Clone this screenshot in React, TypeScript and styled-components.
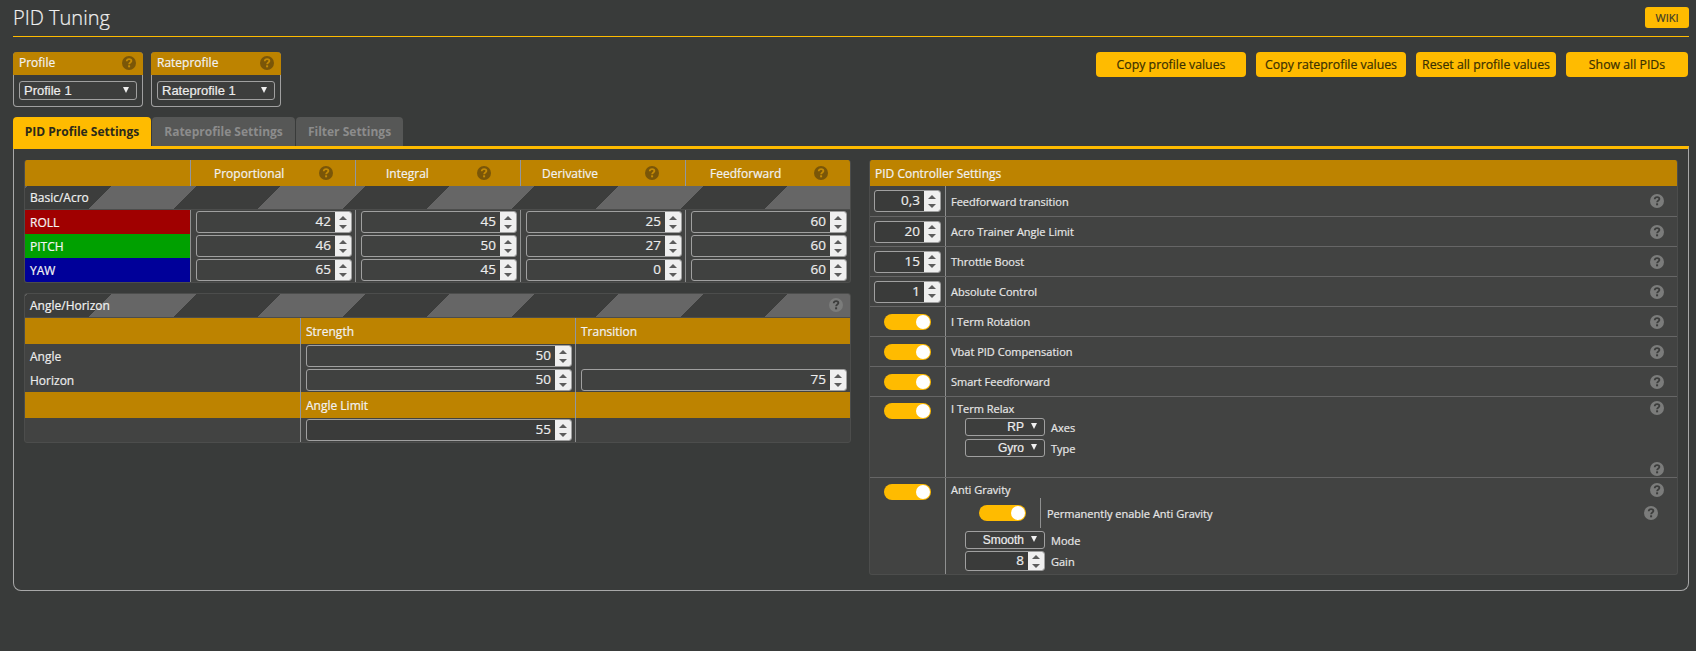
import React from "react";
import styled, { createGlobalStyle } from "styled-components";

const Global = createGlobalStyle`
  html, body { margin: 0; padding: 0; background: #393b3a; }
  body {
    font-family: "Open Sans", "Liberation Sans", sans-serif;
    font-size: 12px;
    color: #ebebeb;
    -webkit-text-stroke: 0.2px;
  }
  * { box-sizing: border-box; }
`;

const GOLD = "#bd8300";
const YEL = "#ffbb00";

const Page = styled.div`
  width: 1696px;
  height: 651px;
  padding: 0 7px 0 13px;
  overflow: hidden;
`;
const TitleBar = styled.div`
  height: 37px;
  border-bottom: 1px solid ${YEL};
  display: flex;
  justify-content: space-between;
  align-items: flex-start;
`;
const Title = styled.h1`
  margin: 4px 0 0;
  font-size: 20px;
  line-height: 27px;
  font-weight: 300;
  color: #f0f0f0;
`;
const Wiki = styled.div`
  margin-top: 7px;
  width: 44px;
  height: 21px;
  background: ${YEL};
  border-radius: 3px;
  color: #3a3a2a;
  font-size: 11px;
  font-weight: 500;
  display: flex;
  align-items: center;
  justify-content: center;
`;
const TopRow = styled.div`
  margin-top: 15px;
  height: 55px;
  display: flex;
  justify-content: space-between;
`;
const Group = styled.div<{ $gap: number; $end?: number }>`
  display: flex;
  gap: ${(p) => p.$gap}px;
  margin-right: ${(p) => p.$end ?? 0}px;
`;
const ProfileBox = styled.div`
  width: 130px;
  height: 55px;
  border: 1px solid #a0a0a0;
  border-top: 0;
  border-radius: 4px;
`;
const ProfileHead = styled.div`
  height: 23px;
  margin: 0 -1px;
  background: ${GOLD};
  border-radius: 4px 4px 0 0;
  padding: 0 7px 2px 6px;
  display: flex;
  align-items: center;
  justify-content: space-between;
  color: #f2f2f2;
  font-weight: 500;
`;
const ActionButton = styled.div<{ $w: number }>`
  width: ${(p) => p.$w}px;
  height: 25px;
  background: ${YEL};
  border-radius: 4px;
  color: #3a3000;
  font-size: 12.3px;
  font-weight: 400;
  display: flex;
  align-items: center;
  justify-content: center;
`;
const Select = styled.div<{ $w: number; $h: number; $fs: number }>`
  width: ${(p) => p.$w}px;
  height: ${(p) => p.$h}px;
  border: 1px solid #a0a0a0;
  border-radius: 3px;
  background: #3d3e3d;
  display: flex;
  align-items: center;
  justify-content: ${(p) => (p.$fs === 13 ? "space-between" : "flex-end")};
  padding: 0 7px 0 4px;
  font-family: "Liberation Sans", sans-serif;
  font-size: ${(p) => p.$fs}px;
  color: #ececec;
  &::after {
    content: "";
    margin-left: 7px;
    margin-top: -2px;
    border-left: 3.5px solid transparent;
    border-right: 3.5px solid transparent;
    border-top: 6px solid #f0f0f0;
  }
`;
const TopSelect = styled(Select)`
  margin: 6px 0 0 5px;
`;
const Tabs = styled.div`
  margin-top: 10px;
  height: 29px;
  display: flex;
  gap: 1px;
`;
const Tab = styled.div<{ $w: number; $active?: boolean }>`
  width: ${(p) => p.$w}px;
  height: ${(p) => (p.$active ? 32 : 29)}px;
  border-radius: 4px 4px 0 0;
  background: ${(p) => (p.$active ? YEL : "#565756")};
  color: ${(p) => (p.$active ? "#2c2a1a" : "#8c8c8c")};
  font-weight: 700;
  font-size: 12px;
  -webkit-text-stroke: 0;
  display: flex;
  justify-content: center;
  padding-top: 6px;
  position: relative;
`;
const Content = styled.div`
  height: 445px;
  border: 1px solid #a8a8a8;
  border-top: 3px solid ${YEL};
  border-radius: 0 0 8px 8px;
  padding: 11px 10px 0 10px;
  display: flex;
  justify-content: space-between;
  align-items: flex-start;
`;
const LeftCol = styled.div`
  width: 827px;
  display: flex;
  flex-direction: column;
  gap: 10px;
`;
const Panel = styled.div<{ $top?: boolean }>`
  background: #424342;
  border: 1px solid #4c4d4c;
  border-top: ${(p) => (p.$top ? "1px solid #4c4d4c" : "0")};
  border-radius: 3px;
  overflow: hidden;
`;
const Striped = styled.div`
  height: 24px;
  display: flex;
  align-items: center;
  justify-content: space-between;
  padding: 0 7px 1px 5px;
  border-bottom: 1px solid #4c4d4c;
  color: #f0f0f0;
  font-weight: 500;
  background: repeating-linear-gradient(
    135deg,
    #666 0,
    #666 2.1px,
    #3c3d3c 2.1px,
    #3c3d3c 61.5px,
    #666 61.5px,
    #666 119.5px
  );
`;
const Grid5 = styled.div`
  display: grid;
  grid-template-columns: 165px 165px 165px 165px 165px;
`;
const Grid3 = styled.div`
  display: grid;
  grid-template-columns: 275px 275px 275px;
`;
const GoldCell = styled.div<{ $sep?: boolean; $l?: number; $r?: number }>`
  height: 26px;
  background: ${GOLD};
  border-left: ${(p) => (p.$sep ? "1px solid #8f97a3" : "0")};
  display: flex;
  align-items: center;
  justify-content: space-between;
  padding: 0 ${(p) => p.$r ?? 0}px 0 ${(p) => p.$l ?? 5}px;
  color: #f2f2f2;
  font-weight: 500;
`;
const AxisCell = styled.div<{ $c: string }>`
  height: 24px;
  background: ${(p) => p.$c};
  display: flex;
  align-items: center;
  padding-left: 5px;
  color: #f4f4f4;
  font-weight: 500;
`;
const ValueCell = styled.div<{ $pr?: number }>`
  height: 24px;
  border-left: 1px solid #8f9090;
  padding: 1px ${(p) => p.$pr ?? 3}px 1px 5px;
`;
const NameCell = styled.div`
  height: 24px;
  display: flex;
  align-items: center;
  padding: 0 5px;
  color: #ebebeb;
  font-weight: 500;
`;
const Spin = styled.div`
  position: absolute;
  right: 0;
  top: 0;
  bottom: 0;
  width: 16px;
  background: #efefef;
  border-radius: 0 2px 2px 0;
  display: flex;
  flex-direction: column;
  align-items: center;
  justify-content: center;
  gap: 5px;
  &::before, &::after {
    content: "";
    border-left: 4px solid transparent;
    border-right: 4px solid transparent;
  }
  &::before { border-bottom: 4px solid #5c5c5c; }
  &::after { border-top: 4px solid #5c5c5c; }
`;
const NumBox = styled.div<{ $w?: number; $h?: number; $dark?: boolean }>`
  position: relative;
  width: ${(p) => (p.$w ? `${p.$w}px` : "100%")};
  height: ${(p) => p.$h ?? 22}px;
  border: 1px solid #a0a0a0;
  border-radius: 3px;
  background: ${(p) => (p.$dark ? "#3a3b3a" : "#404140")};
  color: #ececec;
  font-size: 13.5px;
  font-weight: 500;
  line-height: ${(p) => (p.$h ?? 22) - 3}px;
  text-align: right;
  padding-right: 20px;
`;
const RightPanel = styled(Panel)`
  width: 809px;
  height: 415px;
`;
const RightHead = styled.div`
  height: 26px;
  background: ${GOLD};
  display: flex;
  align-items: center;
  padding-left: 5px;
  color: #f2f2f2;
  font-weight: 500;
`;
const Row = styled.div<{ $h?: number; $last?: boolean }>`
  height: ${(p) => p.$h ?? 30}px;
  display: grid;
  grid-template-columns: 76px 1fr;
  border-bottom: ${(p) => (p.$last ? "0" : "1px solid #666")};
`;
const Lead = styled.div<{ $top?: number }>`
  border-right: 1px solid #8f9090;
  display: flex;
  justify-content: center;
  align-items: ${(p) => (p.$top != null ? "flex-start" : "center")};
  padding: ${(p) => p.$top ?? 0}px 0 0 0;
`;
const Body = styled.div`
  display: flex;
  justify-content: space-between;
  min-width: 0;
  padding: 0 13px 0 5px;
`;
const LabelText = styled.div`
  align-self: center;
  color: #e6e6e6;
  font-weight: 500;
  font-size: 11px;
`;
const Toggle = styled.div`
  width: 47px;
  height: 16px;
  background: ${YEL};
  border-radius: 8px;
  position: relative;
  &::after {
    content: "";
    position: absolute;
    right: 1px;
    top: 1px;
    width: 14px;
    height: 14px;
    border-radius: 50%;
    background: #fff;
  }
`;
const Stack = styled.div`
  display: flex;
  flex-direction: column;
  flex: 1;
  min-width: 0;
`;
const RowHeading = styled.div<{ $mt: number }>`
  margin-top: ${(p) => p.$mt}px;
  color: #e6e6e6;
  font-weight: 500;
  font-size: 11px;
  line-height: 16px;
`;
const SubRow = styled.div<{ $h: number; $mb?: number; $mt?: number }>`
  height: ${(p) => p.$h}px;
  margin: ${(p) => p.$mt ?? 0}px 0 ${(p) => p.$mb ?? 0}px 14px;
  display: flex;
  align-items: center;
  gap: 6px;
`;
const PermRow = styled.div`
  height: 30px;
  display: flex;
  align-items: center;
  margin: 0 -8px 3px 28px;
`;
const PermLabel = styled.div`
  margin-left: 14px;
  height: 30px;
  border-left: 1px solid #8f9090;
  padding-left: 6px;
  display: flex;
  align-items: center;
  flex: 1;
  justify-content: space-between;
  color: #e6e6e6;
  font-weight: 500;
  font-size: 11px;
`;
const HelpCol = styled.div<{ $pad: number }>`
  display: flex;
  flex-direction: column;
  justify-content: space-between;
  padding: ${(p) => p.$pad}px 0 1px;
`;
const HelpCenter = styled.div`
  display: flex;
  align-items: center;
`;
const HelpSvg = styled.svg`
  display: block;
  flex: none;
`;

function Help({ gold }: { gold?: boolean }) {
  return (
    <HelpSvg width="14" height="14" viewBox="0 0 14 14">
      <circle cx="7" cy="7" r="7" fill={gold ? "#7a5608" : "#7b7c7b"} />
      <path
        d="M4.7 5.2C4.8 3.9 5.8 3.1 7.1 3.1C8.4 3.1 9.4 3.9 9.4 5C9.4 6.4 7.2 6.5 7.1 8.2"
        fill="none"
        stroke={gold ? "#c48a05" : "#3c3d3c"}
        strokeWidth="1.8"
      />
      <rect x="6.1" y="9.3" width="2" height="2" fill={gold ? "#c48a05" : "#3c3d3c"} />
    </HelpSvg>
  );
}

function Num({ v, ...rest }: { v: string | number; $w?: number; $h?: number; $dark?: boolean }) {
  return (
    <NumBox {...rest}>
      {v}
      <Spin />
    </NumBox>
  );
}

const cols: [string, number, number][] = [
  ["Proportional", 23, 22],
  ["Integral", 30, 29],
  ["Derivative", 21, 26],
  ["Feedforward", 24, 22],
];
const axes: [string, string, number[]][] = [
  ["ROLL", "#a00000", [42, 45, 25, 60]],
  ["PITCH", "#00a000", [46, 50, 27, 60]],
  ["YAW", "#000099", [65, 45, 0, 60]],
];
const numberRows: [string, string][] = [
  ["0,3", "Feedforward transition"],
  ["20", "Acro Trainer Angle Limit"],
  ["15", "Throttle Boost"],
  ["1", "Absolute Control"],
];

export default function App() {
  return (
    <Page>
      <Global />
      <TitleBar>
        <Title>PID Tuning</Title>
        <Wiki>WIKI</Wiki>
      </TitleBar>
      <TopRow>
        <Group $gap={8}>
          <ProfileBox>
            <ProfileHead>
              Profile
              <Help gold />
            </ProfileHead>
            <TopSelect $w={118} $h={19} $fs={13}>Profile 1</TopSelect>
          </ProfileBox>
          <ProfileBox>
            <ProfileHead>
              Rateprofile
              <Help gold />
            </ProfileHead>
            <TopSelect $w={118} $h={19} $fs={13}>Rateprofile 1</TopSelect>
          </ProfileBox>
        </Group>
        <Group $gap={10} $end={1}>
          <ActionButton $w={150}>Copy profile values</ActionButton>
          <ActionButton $w={150}>Copy rateprofile values</ActionButton>
          <ActionButton $w={140}>Reset all profile values</ActionButton>
          <ActionButton $w={122}>Show all PIDs</ActionButton>
        </Group>
      </TopRow>
      <Tabs>
        <Tab $w={138} $active>PID Profile Settings</Tab>
        <Tab $w={143}>Rateprofile Settings</Tab>
        <Tab $w={107}>Filter Settings</Tab>
      </Tabs>
      <Content>
        <LeftCol>
          <Panel>
            <Grid5>
              <GoldCell />
              {cols.map(([name, l, r]) => (
                <GoldCell key={name} $sep $l={l} $r={r}>
                  {name}
                  <Help gold />
                </GoldCell>
              ))}
            </Grid5>
            <Striped>Basic/Acro</Striped>
            <Grid5>
              {axes.map(([name, color, values]) => (
                <React.Fragment key={name}>
                  <AxisCell $c={color}>{name}</AxisCell>
                  {values.map((v, i) => (
                    <ValueCell key={i}>
                      <Num v={v} />
                    </ValueCell>
                  ))}
                </React.Fragment>
              ))}
            </Grid5>
          </Panel>
          <Panel $top>
            <Striped>
              Angle/Horizon
              <Help />
            </Striped>
            <Grid3>
              <GoldCell />
              <GoldCell $sep>Strength</GoldCell>
              <GoldCell $sep>Transition</GoldCell>
              <NameCell>Angle</NameCell>
              <ValueCell><Num v={50} /></ValueCell>
              <ValueCell />
              <NameCell>Horizon</NameCell>
              <ValueCell><Num v={50} /></ValueCell>
              <ValueCell><Num v={75} /></ValueCell>
              <GoldCell />
              <GoldCell $sep>Angle Limit</GoldCell>
              <GoldCell $sep />
              <NameCell />
              <ValueCell><Num v={55} $dark /></ValueCell>
              <ValueCell />
            </Grid3>
          </Panel>
        </LeftCol>
        <RightPanel>
          <RightHead>PID Controller Settings</RightHead>
          {numberRows.map(([v, label], i) => (
            <Row key={label} $h={i === 0 ? 31 : 30}>
              <Lead><Num v={v} $w={67} $dark /></Lead>
              <Body>
                <LabelText>{label}</LabelText>
                <HelpCenter><Help /></HelpCenter>
              </Body>
            </Row>
          ))}
          {["I Term Rotation", "Vbat PID Compensation", "Smart Feedforward"].map((label) => (
            <Row key={label}>
              <Lead><Toggle /></Lead>
              <Body>
                <LabelText>{label}</LabelText>
                <HelpCenter><Help /></HelpCenter>
              </Body>
            </Row>
          ))}
          <Row $h={81}>
            <Lead $top={6}><Toggle /></Lead>
            <Body>
              <Stack>
                <RowHeading $mt={4}>I Term Relax</RowHeading>
                <SubRow $h={18} $mb={3} $mt={1}>
                  <Select $w={80} $h={18} $fs={12}>RP</Select>
                  <LabelText>Axes</LabelText>
                </SubRow>
                <SubRow $h={18}>
                  <Select $w={80} $h={18} $fs={12}>Gyro</Select>
                  <LabelText>Type</LabelText>
                </SubRow>
              </Stack>
              <HelpCol $pad={4}>
                <Help />
                <Help />
              </HelpCol>
            </Body>
          </Row>
          <Row $h={96} $last>
            <Lead $top={6}><Toggle /></Lead>
            <Body>
              <Stack>
                <RowHeading $mt={4}>Anti Gravity</RowHeading>
                <PermRow>
                  <Toggle />
                  <PermLabel>
                    Permanently enable Anti Gravity
                    <Help />
                  </PermLabel>
                </PermRow>
                <SubRow $h={18} $mb={2}>
                  <Select $w={80} $h={18} $fs={12}>Smooth</Select>
                  <LabelText>Mode</LabelText>
                </SubRow>
                <SubRow $h={20}>
                  <Num v={8} $w={80} $h={20} $dark />
                  <LabelText>Gain</LabelText>
                </SubRow>
              </Stack>
              <HelpCol $pad={5}>
                <Help />
              </HelpCol>
            </Body>
          </Row>
        </RightPanel>
      </Content>
    </Page>
  );
}
